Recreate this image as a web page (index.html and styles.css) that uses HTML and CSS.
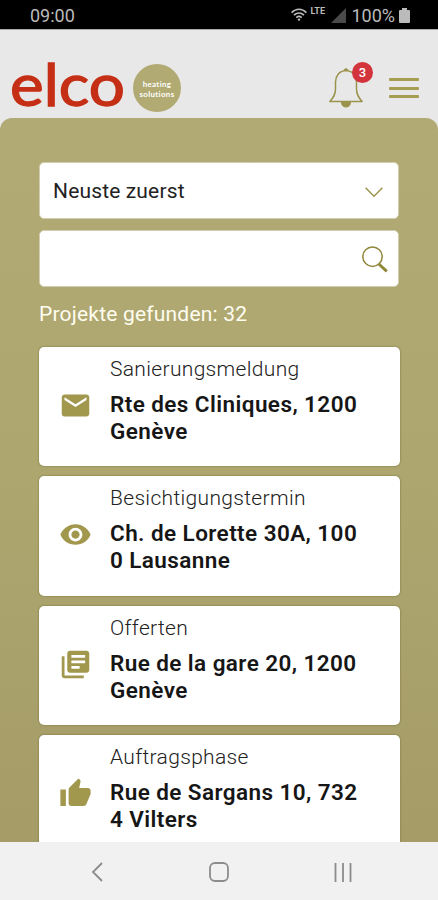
FILE: index.html
```html
<!DOCTYPE html>
<html lang="de">
<head>
    <meta charset="UTF-8">
    <meta name="viewport" content="width=device-width, initial-scale=1.0">
    <title>elco heating solutions</title>
    <link rel="stylesheet" href="styles.css">
</head>
<body>

<!-- Status bar -->
<div class="status-bar">
    <span class="time">09:00</span>
    <div class="status-icons">
        <svg class="wifi" width="16" height="13" viewBox="0 0 16 13" fill="none" stroke="#bbb" stroke-width="1.6">
            <path d="M0.6 4.6C5 0.2 11 0.2 15.4 4.6M3 7.2C6 4.3 10 4.3 13 7.2M5.3 9.6C7 8.1 9 8.1 10.7 9.6"/>
            <circle cx="8" cy="11.6" r="1.2" fill="#bbb" stroke="none"/>
        </svg>
        <span class="lte">LTE</span>
        <svg class="signal" width="15" height="15" viewBox="0 0 15 15"><path d="M15 0v15H0z" fill="#4a4a4a"/></svg>
        <span class="percent">100%</span>
        <svg class="battery" width="11" height="15" viewBox="0 0 11 15"><path d="M3 0h5v2h2a1 1 0 0 1 1 1v11a1 1 0 0 1-1 1H1a1 1 0 0 1-1-1V3a1 1 0 0 1 1-1h2z" fill="#bbb"/></svg>
    </div>
</div>

<header>
    <span class="logo">elco</span>
    <span class="logo-badge">heating<br>solutions</span>
    <div class="bell">
        <svg width="34" height="40" viewBox="0 0 34 40" fill="none" stroke="#9b924b" stroke-width="1.5" stroke-linejoin="round">
            <path d="M17 2.5C10 3 6.500 8 6.500 14v7c0 6-2.500 9-5.600 12.600h32.200C30 30 27.500 27 27.500 21v-7C27.500 8 24 3 17 2.500z"/>
            <path d="M12.500 34.500h9c0 6-9 6-9 0zM15 2.500c0-2.300 4-2.300 4 0z" fill="#9b924b" stroke-width="1"/>
        </svg>
        <span class="count">3</span>
    </div>
    <div class="menu"><i></i><i></i><i></i></div>
</header>

<main>
    <div class="field">
        <span>Neuste zuerst</span>
        <svg class="chevron" width="18" height="11" viewBox="0 0 18 11" fill="none" stroke="#9b924b" stroke-width="1.4"><path d="M0.600 0.800L9 9.300L17.400 0.800"/></svg>
    </div>
    <div class="field">
        <svg class="search" width="26" height="27" viewBox="0 0 26 27" fill="none" stroke="#908739">
            <circle cx="10.500" cy="10.700" r="9.700" stroke-width="1.500"/>
            <path d="M16.800 18l8 7.300" stroke-width="3"/>
        </svg>
    </div>
    <p class="found">Projekte gefunden: 32</p>

    <!-- Project list -->
    <div class="card">
        <svg class="icon" viewBox="0 0 24 24"><path d="M20 4H4c-1.100 0-1.990.9-1.990 2L2 18c0 1.100.9 2 2 2h16c1.100 0 2-.9 2-2V6c0-1.100-.9-2-2-2zm0 4l-8 5-8-5V6l8 5 8-5v2z"/></svg>
        <div class="text">
            <h3>Sanierungsmeldung</h3>
            <p>Rte des Cliniques, 1200<br>Genève</p>
        </div>
    </div>
    <div class="card">
        <svg class="icon" viewBox="0 0 24 24"><path d="M12 4.500C7 4.500 2.730 7.610 1 12c1.730 4.390 6 7.500 11 7.500s9.270-3.110 11-7.500c-1.730-4.390-6-7.500-11-7.500zM12 17c-2.760 0-5-2.240-5-5s2.240-5 5-5 5 2.240 5 5-2.240 5-5 5zm0-8c-1.660 0-3 1.340-3 3s1.340 3 3 3 3-1.340 3-3-1.340-3-3-3z"/></svg>
        <div class="text">
            <h3>Besichtigungstermin</h3>
            <p>Ch. de Lorette 30A, 100<br>0 Lausanne</p>
        </div>
    </div>
    <div class="card">
        <svg class="icon" viewBox="0 0 24 24"><path d="M4 6H2v14c0 1.100.9 2 2 2h14v-2H4V6zm16-4H8c-1.100 0-2 .9-2 2v12c0 1.100.9 2 2 2h12c1.100 0 2-.9 2-2V4c0-1.100-.9-2-2-2zm-1 9H9V9h10v2zm-4 4H9v-2h6v2zm4-8H9V5h10v2z"/></svg>
        <div class="text">
            <h3>Offerten</h3>
            <p>Rue de la gare 20, 1200<br>Genève</p>
        </div>
    </div>
    <div class="card">
        <svg class="icon" viewBox="0 0 24 24"><path d="M1 21h4V9H1v12zm22-11c0-1.100-.9-2-2-2h-6.310l.95-4.570.03-.320c0-.410-.170-.790-.440-1.060L14.170 1 7.590 7.590C7.220 7.950 7 8.450 7 9v10c0 1.100.9 2 2 2h9c.83 0 1.540-.5 1.840-1.220l3.020-7.050c.09-.230.140-.470.140-.730v-2z"/></svg>
        <div class="text">
            <h3>Auftragsphase</h3>
            <p>Rue de Sargans 10, 732<br>4 Vilters</p>
        </div>
    </div>
</main>

<!-- Android navigation -->
<nav>
    <svg width="12" height="20" viewBox="0 0 12 20"><path d="M11 1L2 10l9 9"/></svg>
    <svg width="20" height="20" viewBox="0 0 20 20"><rect x="1" y="1" width="18" height="18" rx="5"/></svg>
    <svg width="18" height="19" viewBox="0 0 18 19"><path d="M1.500 0v19M9 0v19M16.500 0v19"/></svg>
</nav>

</body>
</html>
```

FILE: styles.css
```css
* {
    box-sizing: border-box;
}
body {
    font-family: Roboto, "Liberation Sans", sans-serif;
    margin: 0;
    height: 900px;
    display: flex;
    flex-direction: column;
    overflow: hidden;
    background-color: #e8e8e8;
}
.status-bar {
    flex: none;
    height: 29px;
    display: flex;
    justify-content: space-between;
    background-color: #000;
    color: #bbb;
    font-size: 18px;
    line-height: 32px;
    padding: 0 28px 0 30px;
}
.status-icons {
    display: flex;
    align-items: flex-start;
}
.wifi {
    margin-top: 8px;
}
.lte {
    font-size: 9px;
    font-weight: bold;
    line-height: 23px;
    margin-left: 3px;
    width: 17px;
}
.signal {
    margin: 8px 5px 0 4px;
}
.battery {
    margin: 8px 0 0 4px;
}
header {
    flex: none;
    height: 89px;
    display: flex;
    align-items: flex-start;
    padding: 0 19px 0 10px;
    border-top: 1px solid #aaa;
}
.logo {
    font-family: Lato, sans-serif;
    font-size: 58px;
    line-height: 72px;
    margin-top: 18px;
    width: 123px;
    color: #c52f16;
    -webkit-text-stroke: 1.3px #c52f16;
    transform: scaleX(1.1);
    transform-origin: left;
}
.logo-badge {
    width: 48px;
    height: 48px;
    margin-top: 34px;
    border-radius: 50%;
    background-color: #b1aa72;
    color: #fff;
    font-family: Lato, sans-serif;
    font-weight: bold;
    font-size: 8px;
    line-height: 10px;
    letter-spacing: 0.3px;
    text-align: center;
    padding-top: 15px;
}
.bell {
    position: relative;
    margin: 38px 26px 0 auto;
    height: 40px;
}
.count {
    position: absolute;
    left: 23px;
    top: -6px;
    width: 21px;
    height: 21px;
    border-radius: 50%;
    background-color: #d3343c;
    color: #fff;
    font-size: 13px;
    font-weight: 500;
    line-height: 21px;
    text-align: center;
}
.menu {
    margin-top: 48px;
    width: 30px;
    display: grid;
    gap: 5.5px;
}
.menu i {
    height: 3px;
    border-radius: 1px;
    background-color: #a59d52;
}
main {
    flex: 1;
    min-height: 0;
    overflow: hidden;
    border-radius: 12px 12px 0 0;
    background: linear-gradient(#b1aa74, #ada66f 50%, #a59c68);
    padding: 44px 38px 0 39px;
}
.field {
    height: 57px;
    margin: 0 1px 11px 0;
    display: flex;
    align-items: center;
    background-color: #fff;
    border: 1px solid #d2cdb2;
    border-radius: 5px;
    padding: 0 10px 0 13px;
    font-size: 21px;
    letter-spacing: 0.15px;
    color: #222;
}
.field svg {
    margin-left: auto;
}
.field .chevron {
    margin: 4px 5px 0 auto;
}
.search {
    margin-top: 2px;
}
.found {
    margin: 0 0 17px;
    padding-top: 1px;
    font-size: 21px;
    line-height: 31px;
    letter-spacing: 0.2px;
    color: #fffdf0;
}
.card {
    height: 119.3px;
    margin-bottom: 10px;
    display: flex;
    background-color: #fff;
    border-radius: 5px;
    box-shadow: 0 0 2px #6e672d;
    padding: 9px 0 0 20px;
}
.icon {
    width: 33px;
    height: 33px;
    margin: 33px 18px 0 0;
    fill: #a1984e;
}
.card h3 {
    margin: 0 0 8px;
    font-size: 21px;
    font-weight: 300;
    line-height: 27px;
    letter-spacing: 0.33px;
    color: #222;
}
.card p {
    margin: 0;
    font-size: 22.5px;
    font-weight: 600;
    line-height: 27px;
    letter-spacing: 0.42px;
    color: #161616;
}
nav {
    flex: none;
    height: 58px;
    display: flex;
    justify-content: space-between;
    align-items: center;
    background-color: #f1f1f1;
    padding: 2px 86px 0 91px;
}
nav svg {
    fill: none;
    stroke: #8c8c8c;
    stroke-width: 1.8;
}
```
